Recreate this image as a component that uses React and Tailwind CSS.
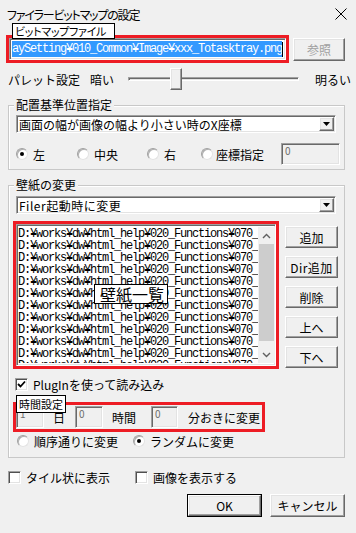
import React from 'react';

const jp = "font-['Noto_Sans_CJK_JP','Noto_Sans',sans-serif]";
const mono = "font-['Liberation_Mono',monospace]";

const raised =
  'bg-[#f0f0f0] border border-t-white border-l-white border-r-[#696969] border-b-[#696969] shadow-[inset_-1px_-1px_#a0a0a0,inset_1px_1px_#e3e3e3]';
const sunken =
  'border border-t-[#a0a0a0] border-l-[#a0a0a0] border-r-white border-b-white shadow-[inset_1px_1px_#696969,inset_-1px_-1px_#e3e3e3]';

// 40 chars, the list box cuts the rest
const listLine = 'D:¥works¥dw¥html_help¥020_Functions¥070_';

const Button = ({ children, className = '', disabled }) => (
  <div
    className={`${raised} flex items-center justify-center text-[12px] ${
      disabled ? 'text-[#a0a0a0]' : 'text-black'
    } ${className}`}
  >
    {children}
  </div>
);

const Radio = ({ checked }) => (
  <div className="w-[12px] h-[12px] rounded-full border border-t-[#a0a0a0] border-l-[#a0a0a0] border-r-[#e3e3e3] border-b-[#e3e3e3] bg-white shadow-[inset_1px_1px_#b0b0b0] flex items-center justify-center shrink-0">
    {checked && <div className="w-[4px] h-[4px] rounded-full bg-black" />}
  </div>
);

const Check = ({ checked }) => (
  <div className="w-[13px] h-[13px] bg-white border border-t-[#a0a0a0] border-l-[#a0a0a0] border-r-white border-b-white shadow-[inset_1px_1px_#505050,inset_-1px_-1px_#e3e3e3] flex items-center justify-center shrink-0">
    {checked && (
      <svg width="9" height="9" viewBox="0 0 9 9">
        <polyline points="1,4 3.5,6.5 8,1.5" fill="none" stroke="#000" strokeWidth="1.8" />
      </svg>
    )}
  </div>
);

const Combo = ({ text, latin }) => (
  <div className={`${sunken} ml-[7px] w-[320px] h-[18px] bg-white flex items-center pl-[2px] pr-[1px]`}>
    <span className={`flex-1 whitespace-nowrap ${latin ? 'tracking-[0.5px]' : ''}`}>{text}</span>
    <div className={`${raised} w-[15px] h-[14px] flex items-center justify-center`}>
      <svg width="7" height="4" viewBox="0 0 7 4">
        <polygon points="0,0 7,0 3.5,4" fill="#000" />
      </svg>
    </div>
  </div>
);

const DisabledBox = ({ value, className = '' }) => (
  <div className={`${sunken} bg-[#f0f0f0] h-[22px] pl-[3px] pt-[1px] text-[10px] leading-[12px] text-[#6d6d6d] ${className}`}>
    {value}
  </div>
);

const Group = ({ label, className = '', children }) => (
  <div className={`relative ml-[8px] w-[337px] border border-[#c8c8c8] shadow-[inset_1px_1px_white] ${className}`}>
    <span className="absolute left-[5px] -top-[9px] h-[16px] px-[2px] bg-[#f0f0f0] leading-[16px]">{label}</span>
    {children}
  </div>
);

export default function App() {
  return (
    <div className={`relative w-[356px] h-[533px] bg-[#f0f0f0] overflow-hidden text-[12px] leading-[15px] text-black ${jp}`}>
      {/* Title bar */}
      <div className="h-[28px] flex items-center justify-between pl-[7px] pr-[9px]">
        <span className="text-[12px] tracking-[-1.2px] [font-feature-settings:'palt']">ファイラービットマップの設定</span>
        <svg width="12" height="12" viewBox="0 0 12 12">
          <path d="M0.5 0.5 L11.5 11.5 M11.5 0.5 L0.5 11.5" stroke="#000" strokeWidth="1" />
        </svg>
      </div>

      {/* File row */}
      <div className="flex mt-[7px] h-[28px]">
        <div className="ml-[6px] w-[283px] h-[28px] border-[3px] border-[#ed1c24]">
          <div className={`${sunken} h-full bg-white flex items-center px-[2px]`}>
            <span className={`bg-[#3399ff] text-white h-[16px] leading-[16px] whitespace-nowrap overflow-hidden text-[12px] tracking-[-1.2px] ${mono}`}>
              aySetting¥010_Common¥Image¥xxx_Totasktray.png
            </span>
            <div className="w-[1px] h-[15px] bg-black" />
          </div>
        </div>
        <Button disabled className="ml-[4px] mt-[3px] w-[52px] h-[23px]">参照</Button>
      </div>

      {/* Palette row */}
      <div className="flex items-center h-[26px] mt-[3px]">
        <span className="ml-[8px]">パレット設定</span>
        <span className="ml-[10px]">暗い</span>
        <div className="relative ml-[14px] w-[171px] h-[22px] flex items-center">
          <div className={`${sunken} w-full h-[4px] bg-[#e7eaea]`} />
          <div className={`${raised} absolute left-[42px] top-0 w-[12px] h-[22px]`} />
        </div>
        <span className="ml-[16px]">明るい</span>
      </div>

      {/* Group 1 */}
      <Group label="配置基準位置指定" className="mt-[13px] h-[65px] pt-[9px]">
        <Combo text="画面の幅が画像の幅より小さい時のX座標" />
        <div className="flex items-center mt-[10px] h-[22px]">
          <div className="ml-[7px] flex items-center gap-[5px]"><Radio checked /><span>左</span></div>
          <div className="ml-[32px] flex items-center gap-[5px]"><Radio /><span>中央</span></div>
          <div className="ml-[29px] flex items-center gap-[5px]"><Radio /><span>右</span></div>
          <div className="ml-[25px] flex items-center gap-[3px]"><Radio /><span>座標指定</span></div>
          <DisabledBox value="0" className="ml-[17px] w-[59px]" />
        </div>
      </Group>

      {/* Group 2 */}
      <Group label="壁紙の変更" className="mt-[15px] h-[273px] pt-[10px]">
        <Combo text="Filer起動時に変更" latin />

        <div className="flex mt-[7px]">
          <div className="ml-[4px] w-[266px] h-[148px] border-[3px] border-[#ed1c24]">
            <div className={`${sunken} h-full bg-white flex pl-[1px] py-[2px]`}>
              <div className={`flex-1 overflow-hidden pt-[1px] text-[12px] tracking-[-1.2px] ${mono}`}>
                {Array.from({ length: 12 }).map((_, i) => (
                  <div key={i} className="h-[12px] leading-[12px] whitespace-nowrap">{listLine}</div>
                ))}
              </div>
              <div className="w-[17px] bg-[#f0f0f0] flex flex-col">
                <div className="h-[17px] flex items-center justify-center">
                  <svg width="9" height="6" viewBox="0 0 9 6">
                    <polyline points="1,5 4.5,1.5 8,5" fill="none" stroke="#606060" strokeWidth="1.4" />
                  </svg>
                </div>
                <div className="flex-1 px-[1px]">
                  <div className="h-[97px] bg-[#cdcdcd]" />
                </div>
                <div className="h-[17px] flex items-center justify-center">
                  <svg width="9" height="6" viewBox="0 0 9 6">
                    <polyline points="1,1 4.5,4.5 8,1" fill="none" stroke="#606060" strokeWidth="1.4" />
                  </svg>
                </div>
              </div>
            </div>
          </div>
          <div className="ml-[6px] pt-[5px] flex flex-col gap-[8px]">
            <Button className="w-[53px] h-[22px]">追加</Button>
            <Button className="w-[53px] h-[22px] tracking-[0.5px]">Dir追加</Button>
            <Button className="w-[53px] h-[22px]">削除</Button>
            <Button className="w-[53px] h-[22px]">上へ</Button>
            <Button className="w-[53px] h-[22px]">下へ</Button>
          </div>
        </div>

        <div className="flex items-center mt-[7px] h-[17px] ml-[6px] gap-[5px]">
          <Check checked />
          <span>PlugInを使って読み込み</span>
        </div>

        <div className="ml-[4px] mt-[9px] w-[252px] h-[30px] border-[3px] border-[#ed1c24] flex items-center">
          <DisabledBox value="1" className="w-[28px]" />
          <span className="ml-[9px]">日</span>
          <DisabledBox value="0" className="ml-[10px] w-[28px]" />
          <span className="ml-[9px]">時間</span>
          <DisabledBox value="0" className="ml-[15px] w-[27px]" />
          <span className="ml-[10px]">分おきに変更</span>
        </div>

        <div className="flex items-center mt-[1px] h-[16px]">
          <div className="ml-[8px] flex items-center gap-[5px]"><Radio /><span>順序通りに変更</span></div>
          <div className="ml-[15px] flex items-center gap-[5px]"><Radio checked /><span>ランダムに変更</span></div>
        </div>
      </Group>

      {/* Bottom checkboxes */}
      <div className="flex items-center mt-[11px] h-[16px]">
        <div className="ml-[8px] flex items-center gap-[5px]"><Check /><span>タイル状に表示</span></div>
        <div className="ml-[25px] flex items-center gap-[5px]"><Check /><span>画像を表示する</span></div>
      </div>

      {/* Dialog buttons */}
      <div className="flex justify-end gap-[8px] mt-[9px] pr-[11px]">
        <div className="w-[75px] h-[23px] border border-black">
          <Button className="w-full h-full">OK</Button>
        </div>
        <Button className="w-[75px] h-[23px]">キャンセル</Button>
      </div>

      {/* Tooltips */}
      <div className="absolute left-[12px] top-[23px] w-[103px] h-[16px] bg-white border border-black flex items-center pl-[2px] text-[11px] whitespace-nowrap tracking-[-0.3px] [font-feature-settings:'palt']">
        ビットマップファイル
      </div>
      <div className="absolute left-[94px] top-[284px] w-[74px] h-[20px] bg-white border border-black flex items-center pl-[5px] text-[16px] leading-[18px]">
        壁紙一覧
      </div>
      <div className="absolute left-[16px] top-[395px] w-[50px] h-[18px] bg-white border border-black flex items-center pl-[2px] text-[11px]">
        時間設定
      </div>
    </div>
  );
}
